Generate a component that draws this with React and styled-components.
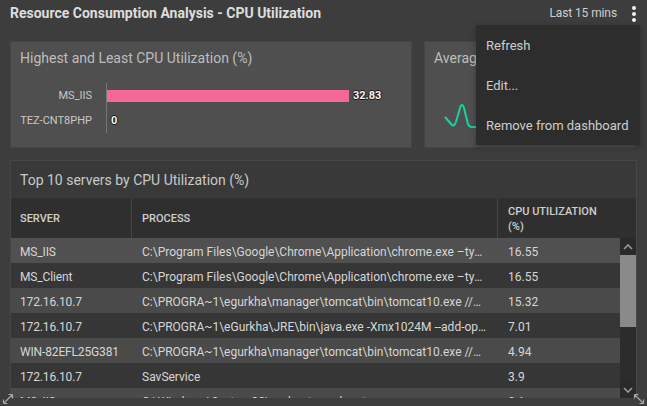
import React from "react";
import styled, { createGlobalStyle } from "styled-components";

const GlobalStyle = createGlobalStyle`
  html, body {
    margin: 0;
    padding: 0;
    background: #3d3d3d;
  }
  * { box-sizing: border-box; }
`;

const bars = [
  { name: "MS_IIS", value: 32.83 },
  { name: "TEZ-CNT8PHP", value: 0 },
];

const rows = [
  { server: "MS_IIS", process: "C:\\Program Files\\Google\\Chrome\\Application\\chrome.exe –type=renderer --display-capture", cpu: "16.55" },
  { server: "MS_Client", process: "C:\\Program Files\\Google\\Chrome\\Application\\chrome.exe –type=gpu-process --field-trial", cpu: "16.55" },
  { server: "172.16.10.7", process: "C:\\PROGRA~1\\egurkha\\manager\\tomcat\\bin\\tomcat10.exe //RS//eGurkhaManager", cpu: "15.32" },
  { server: "172.16.10.7", process: "C:\\PROGRA~1\\eGurkha\\JRE\\bin\\java.exe -Xmx1024M --add-opens=java.base", cpu: "7.01" },
  { server: "WIN-82EFL25G381", process: "C:\\PROGRA~1\\egurkha\\manager\\tomcat\\bin\\tomcat10.exe //RS//eGurkhaManager", cpu: "4.94" },
  { server: "172.16.10.7", process: "SavService", cpu: "3.9" },
  { server: "MS_IIS", process: "C:\\Windows\\System32\\svchost.exe -k netsvcs", cpu: "2.1" },
];

const BAR_MAX = 242;
const maxValue = Math.max(...bars.map((b) => b.value));

const App = () => {
  return (
    <>
      <GlobalStyle />
      <Page>
        <Header>
          <Title>Resource Consumption Analysis - CPU Utilization</Title>
          <HeaderRight>
            <TimeRange>Last 15 mins</TimeRange>
            <Kebab>
              <span />
              <span />
              <span />
            </Kebab>
          </HeaderRight>
        </Header>

        <TopRow>
          <Panel>
            <PanelTitle>Highest and Least CPU Utilization (%)</PanelTitle>
            <Chart>
              {bars.map((b) => (
                <BarRow key={b.name}>
                  <BarLabel>{b.name}</BarLabel>
                  <BarTrack>
                    {b.value > 0 && (
                      <Bar style={{ width: (b.value / maxValue) * BAR_MAX }} />
                    )}
                    <BarValue>{b.value}</BarValue>
                  </BarTrack>
                </BarRow>
              ))}
            </Chart>
          </Panel>
          <Panel>
            <PanelTitle>Average CPU Utilization (%)</PanelTitle>
            <Spark viewBox="0 0 80 40" width="80" height="40">
              <path
                d="M10 17 L17 25 Q19 27 21 22 L25 8 Q27 2 29 8 L33 24 Q34 27 37 27 L70 28"
                fill="none"
                stroke="#17d3a0"
                strokeWidth="2"
                strokeLinejoin="round"
              />
            </Spark>
          </Panel>
        </TopRow>

        <TablePanel>
          <TableTitle>Top 10 servers by CPU Utilization (%)</TableTitle>
          <HeadRow>
            <HeadCell>SERVER</HeadCell>
            <HeadCell $divider>PROCESS</HeadCell>
            <HeadCell $divider>
              <HeadText>CPU UTILIZATION (%)</HeadText>
            </HeadCell>
          </HeadRow>
          <Body>
            <RowList>
              {rows.map((r, i) => (
                <Row key={i} $odd={i % 2 === 0} $hover={i === 0}>
                  <Cell>{r.server}</Cell>
                  <Cell>{r.process}</Cell>
                  <Cell>{r.cpu}</Cell>
                </Row>
              ))}
            </RowList>
            <ScrollBar>
              <ScrollButton>
                <svg width="10" height="6" viewBox="0 0 10 6">
                  <polyline points="1,5 5,1 9,5" fill="none" stroke="#9a9a9a" strokeWidth="1.6" />
                </svg>
              </ScrollButton>
              <Thumb />
              <ScrollSpacer />
              <ScrollButton>
                <svg width="10" height="6" viewBox="0 0 10 6">
                  <polyline points="1,1 5,5 9,1" fill="none" stroke="#9a9a9a" strokeWidth="1.6" />
                </svg>
              </ScrollButton>
            </ScrollBar>
          </Body>
        </TablePanel>

        <Menu>
          <MenuItem>Refresh</MenuItem>
          <MenuItem>Edit...</MenuItem>
          <MenuItem>Remove from dashboard</MenuItem>
        </Menu>

        <ResizeIcon $left>
          <svg width="12" height="12" viewBox="0 0 12 12">
            <path d="M1.5 10.5 L10.5 1.5 M1.5 10.5 V6.5 M1.5 10.5 H5.5 M10.5 1.5 H6.5 M10.5 1.5 V5.5" fill="none" stroke="#a8a8a8" strokeWidth="1.2" />
          </svg>
        </ResizeIcon>
        <ResizeIcon>
          <svg width="12" height="12" viewBox="0 0 12 12">
            <path d="M1.5 1.5 L10.5 10.5 M1.5 1.5 V5.5 M1.5 1.5 H5.5 M10.5 10.5 H6.5 M10.5 10.5 V6.5" fill="none" stroke="#a8a8a8" strokeWidth="1.2" />
          </svg>
        </ResizeIcon>
      </Page>
    </>
  );
};

const Page = styled.div`
  position: relative;
  width: 647px;
  height: 406px;
  overflow: hidden;
  padding: 0 10px;
  background: #3d3d3d;
  font-family: Roboto, "Liberation Sans", sans-serif;
  color: #cfcfcf;
`;

const Header = styled.div`
  height: 26px;
  display: flex;
  align-items: center;
  justify-content: space-between;
`;

const Title = styled.div`
  font-size: 14px;
  font-weight: 700;
  color: #dedede;
`;

const HeaderRight = styled.div`
  display: flex;
  align-items: center;
  gap: 15px;
`;

const TimeRange = styled.div`
  font-size: 12px;
  letter-spacing: -0.1px;
  color: #cfcfcf;
`;

const Kebab = styled.div`
  display: flex;
  flex-direction: column;
  gap: 2px;
  margin-top: 1px;
  margin-right: 1px;
  span {
    width: 4px;
    height: 4px;
    border-radius: 50%;
    background: #f2f2f2;
  }
`;

const TopRow = styled.div`
  margin-top: 15px;
  display: grid;
  grid-template-columns: 402px 212px;
  gap: 12px;
`;

const Panel = styled.div`
  height: 107px;
  background: #4f4f4f;
  border: 1px solid #454545;
  padding: 6px 9px 0;
  overflow: hidden;
`;

const PanelTitle = styled.div`
  font-size: 14px;
  line-height: 20px;
  color: #bdbdbd;
  white-space: nowrap;
`;

const Chart = styled.div`
  margin-top: 14px;
  display: flex;
  flex-direction: column;
  padding: 1px 0 2px;
`;

const BarRow = styled.div`
  display: flex;
  align-items: center;
  height: 25px;
`;

const BarLabel = styled.div`
  width: 86px;
  padding-right: 14px;
  text-align: right;
  font-size: 11px;
  color: #c8c8c8;
  white-space: nowrap;
`;

const BarTrack = styled.div`
  height: 100%;
  flex: 1;
  display: flex;
  align-items: center;
  border-left: 1px solid #777;
`;

const Bar = styled.div`
  height: 12px;
  background: #f6679a;
`;

const BarValue = styled.div`
  margin-left: 4px;
  font-size: 11px;
  font-weight: 700;
  color: #f4f4f4;
  text-shadow: -1px 0 #1a1a1a, 1px 0 #1a1a1a, 0 -1px #1a1a1a, 0 1px #1a1a1a;
`;

const Spark = styled.svg`
  display: block;
  margin-top: 32px;
  margin-left: 1px;
`;

const TablePanel = styled.div`
  margin-top: 12px;
  width: 627px;
  height: 238px;
  background: #393939;
  border: 1px solid #474747;
  border-bottom: none;
  display: flex;
  flex-direction: column;
`;

const TableTitle = styled.div`
  height: 37px;
  padding: 0 9px;
  display: flex;
  align-items: center;
  font-size: 14px;
  color: #c9c9c9;
`;

const HeadRow = styled.div`
  height: 40px;
  display: grid;
  grid-template-columns: 120px 366px 1fr;
  background: #2f2f2f;
`;

const HeadCell = styled.div`
  display: flex;
  align-items: center;
  padding: 1px 8px 0 ${(p) => (p.$divider ? "10px" : "9px")};
  border-left: ${(p) => (p.$divider ? "1px solid #474747" : "none")};
  font-size: 11px;
  font-weight: 500;
  line-height: 15px;
  color: #cfcfcf;
`;

const HeadText = styled.span`
  max-width: 96px;
`;

const Body = styled.div`
  flex: 1;
  display: flex;
  min-height: 0;
`;

const RowList = styled.div`
  flex: 1;
  overflow: hidden;
`;

const Row = styled.div`
  height: 25px;
  display: grid;
  grid-template-columns: 120px 366px 1fr;
  align-items: center;
  padding-top: 2px;
  background: ${(p) => (p.$hover ? "#505050" : p.$odd ? "#4a4a4a" : "#363636")};
`;

const Cell = styled.div`
  padding: 0 10px 0 9px;
  font-size: 12px;
  color: #d6d6d6;
  white-space: nowrap;
  overflow: hidden;
  text-overflow: ellipsis;
  &:first-child {
    padding-right: 0;
    letter-spacing: -0.15px;
  }
  &:not(:first-child) {
    padding-left: 11px;
  }
`;

const ScrollBar = styled.div`
  width: 16px;
  background: #2c2c2c;
  display: flex;
  flex-direction: column;
`;

const ScrollButton = styled.div`
  height: 17px;
  display: flex;
  align-items: center;
  justify-content: center;
  background: #2a2a2a;
`;

const Thumb = styled.div`
  height: 72px;
  background: #8a8a8a;
`;

const ScrollSpacer = styled.div`
  flex: 1;
`;

const Menu = styled.div`
  position: absolute;
  top: 25px;
  right: 7px;
  width: 164px;
  background: #2d2d2d;
  box-shadow: 0 2px 6px rgba(0, 0, 0, 0.3);
`;

const MenuItem = styled.div`
  height: 40px;
  display: flex;
  align-items: center;
  padding: 0 10px;
  font-size: 13px;
  color: #cdcdcd;
  white-space: nowrap;
`;

const ResizeIcon = styled.div`
  position: absolute;
  bottom: 1px;
  ${(p) => (p.$left ? "left: 2px;" : "right: 2px;")}
  width: 12px;
  height: 12px;
  svg { display: block; }
`;

export default App;
